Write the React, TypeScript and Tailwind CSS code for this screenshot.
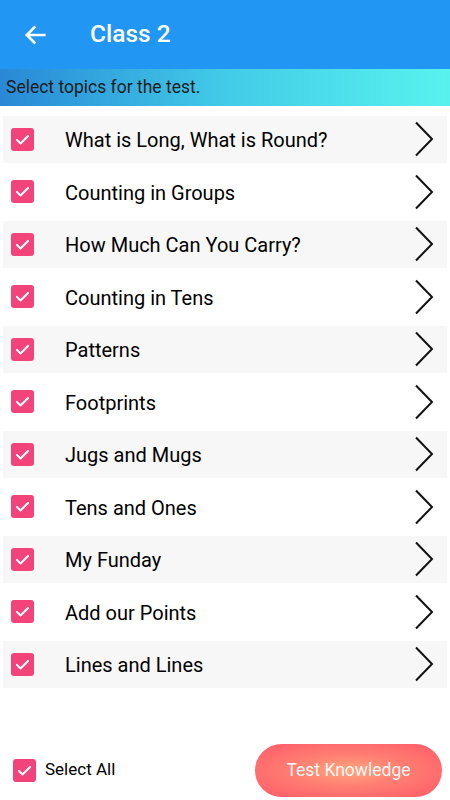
import React, { useState } from 'react';

const topics = [
  'What is Long, What is Round?',
  'Counting in Groups',
  'How Much Can You Carry?',
  'Counting in Tens',
  'Patterns',
  'Footprints',
  'Jugs and Mugs',
  'Tens and Ones',
  'My Funday',
  'Add our Points',
  'Lines and Lines',
];

function CheckBox({ checked, onClick }: { checked: boolean; onClick: () => void }) {
  return (
    <button
      onClick={onClick}
      className={`flex h-[23px] w-[23px] shrink-0 items-center justify-center rounded-[3px] ${checked ? 'bg-[#f2437b]' : 'border-2 border-gray-500 bg-white'}`}
    >
      {checked && (
        <svg viewBox="0 0 24 24" className="h-[19px] w-[19px]" fill="none" stroke="white" strokeWidth="2.6" strokeLinecap="round" strokeLinejoin="round">
          <path d="M5 12.5l4.5 4.5L19 7.5" />
        </svg>
      )}
    </button>
  );
}

export default function App() {
  const [checked, setChecked] = useState<boolean[]>(topics.map(() => true));
  const allChecked = checked.every(Boolean);

  const toggle = (i: number) => setChecked(prev => prev.map((c, j) => (j === i ? !c : c)));

  return (
    <div className="flex h-[800px] w-[450px] flex-col bg-white font-['Roboto',sans-serif]">
      {/* app bar */}
      <div className="flex h-[69px] shrink-0 items-center bg-[#2196f3] text-white">
        <svg viewBox="0 0 24 24" className="ml-[21px] h-[28px] w-[28px]" fill="none" stroke="white" strokeWidth="2.2" strokeLinecap="square">
          <path d="M20 12H5M11.5 5.5L5 12l6.5 6.5" />
        </svg>
        <span className="ml-[41px] text-[24.5px] font-medium">Class 2</span>
      </div>

      {/* hint band */}
      <div className="flex h-[37px] shrink-0 items-center bg-gradient-to-r from-[#2a88d6] via-[#42cbe7] to-[#58f2ee] pl-[6px] text-[17.5px] text-[#1c1c1c]">
        Select topics for the test.
      </div>

      {/* topics */}
      <div className="mt-[10px] flex flex-col gap-[6px] px-[3px]">
        {topics.map((t, i) => (
          <div
            key={t}
            className={`flex h-[46.5px] items-center ${i % 2 === 0 ? 'bg-[#f7f7f7]' : 'bg-white'}`}
          >
            <div className="ml-[8px]">
              <CheckBox checked={checked[i]} onClick={() => toggle(i)} />
            </div>
            <span className="ml-[31px] flex-1 pt-[2px] text-[20px] text-black">{t}</span>
            <svg viewBox="0 0 20 36" className="mr-[13px] h-[36px] w-[20px]" fill="none" stroke="#111" strokeWidth="2">
              <path d="M2 1.5L18 18 2 34.5" />
            </svg>
          </div>
        ))}
      </div>

      {/* footer */}
      <div className="mt-auto flex h-[60px] items-center justify-between pb-[0px] pl-[13px] pr-[8px]">
        <div className="flex items-center">
          <CheckBox
            checked={allChecked}
            onClick={() => setChecked(topics.map(() => !allChecked))}
          />
          <span className="ml-[9px] text-[17px] text-black">Select All</span>
        </div>
        <button className="flex h-[53px] w-[187px] items-center justify-center rounded-full bg-[radial-gradient(ellipse_at_center,#ffa57c_0%,#ff7c72_45%,#ff5a68_100%)] text-[17.5px] text-white/95">
          Test Knowledge
        </button>
      </div>
    </div>
  );
}
